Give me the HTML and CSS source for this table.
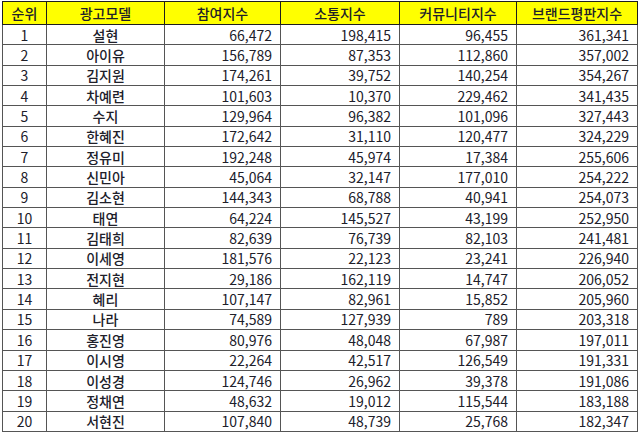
FILE: index.html
```html
<!DOCTYPE html>
<html lang="ko">
<head>
<meta charset="utf-8">
<link rel="stylesheet" href="styles.css">
</head>
<body>
<table class="rank">
<colgroup>
<col class="c1"><col class="c2"><col class="c3"><col class="c4"><col class="c5"><col class="c6">
</colgroup>
<thead>
<tr><th>순위</th><th>광고모델</th><th>참여지수</th><th>소통지수</th><th>커뮤니티지수</th><th>브랜드평판지수</th></tr>
</thead>
<tbody>
<tr><td>1</td><td>설현</td><td>66,472</td><td>198,415</td><td>96,455</td><td>361,341</td></tr>
<tr><td>2</td><td>아이유</td><td>156,789</td><td>87,353</td><td>112,860</td><td>357,002</td></tr>
<tr><td>3</td><td>김지원</td><td>174,261</td><td>39,752</td><td>140,254</td><td>354,267</td></tr>
<tr><td>4</td><td>차예련</td><td>101,603</td><td>10,370</td><td>229,462</td><td>341,435</td></tr>
<tr><td>5</td><td>수지</td><td>129,964</td><td>96,382</td><td>101,096</td><td>327,443</td></tr>
<tr><td>6</td><td>한혜진</td><td>172,642</td><td>31,110</td><td>120,477</td><td>324,229</td></tr>
<tr><td>7</td><td>정유미</td><td>192,248</td><td>45,974</td><td>17,384</td><td>255,606</td></tr>
<tr><td>8</td><td>신민아</td><td>45,064</td><td>32,147</td><td>177,010</td><td>254,222</td></tr>
<tr><td>9</td><td>김소현</td><td>144,343</td><td>68,788</td><td>40,941</td><td>254,073</td></tr>
<tr><td>10</td><td>태연</td><td>64,224</td><td>145,527</td><td>43,199</td><td>252,950</td></tr>
<tr><td>11</td><td>김태희</td><td>82,639</td><td>76,739</td><td>82,103</td><td>241,481</td></tr>
<tr><td>12</td><td>이세영</td><td>181,576</td><td>22,123</td><td>23,241</td><td>226,940</td></tr>
<tr><td>13</td><td>전지현</td><td>29,186</td><td>162,119</td><td>14,747</td><td>206,052</td></tr>
<tr><td>14</td><td>혜리</td><td>107,147</td><td>82,961</td><td>15,852</td><td>205,960</td></tr>
<tr><td>15</td><td>나라</td><td>74,589</td><td>127,939</td><td>789</td><td>203,318</td></tr>
<tr><td>16</td><td>홍진영</td><td>80,976</td><td>48,048</td><td>67,987</td><td>197,011</td></tr>
<tr><td>17</td><td>이시영</td><td>22,264</td><td>42,517</td><td>126,549</td><td>191,331</td></tr>
<tr><td>18</td><td>이성경</td><td>124,746</td><td>26,962</td><td>39,378</td><td>191,086</td></tr>
<tr><td>19</td><td>정채연</td><td>48,632</td><td>19,012</td><td>115,544</td><td>183,188</td></tr>
<tr><td>20</td><td>서현진</td><td>107,840</td><td>48,739</td><td>25,768</td><td>182,347</td></tr>
</tbody>
</table>
</body>
</html>
```
FILE: styles.css
```css
html, body {
  margin: 0;
  padding: 0;
  background: #ffffff;
}
body {
  padding: 1px 0 0 2px;
}
.rank {
  border-collapse: collapse;
  table-layout: fixed;
  width: 635px;
  font-family: "Noto Sans CJK KR", "Noto Sans", sans-serif;
  font-size: 14px;
  color: #20202a;
}
.c1 { width: 44px; }
.c2 { width: 118px; }
.c3 { width: 116px; }
.c4 { width: 119px; }
.c5 { width: 117px; }
.c6 { width: 121px; }
.rank th {
  background: #ffff00;
  font-weight: 500;
  height: 22px;
  padding: 0;
  border: 1px solid #1e1e1e;
  text-align: center;
  line-height: 20px;
}
.rank td {
  height: 19.35px;
  padding: 0 8px 0 0;
  border: 1px solid #555555;
  text-align: right;
  line-height: 18px;
}
.rank td:nth-child(1),
.rank td:nth-child(2) {
  text-align: center;
  padding: 0;
}
.rank td:nth-child(2) {
  font-weight: 500;
}
```
